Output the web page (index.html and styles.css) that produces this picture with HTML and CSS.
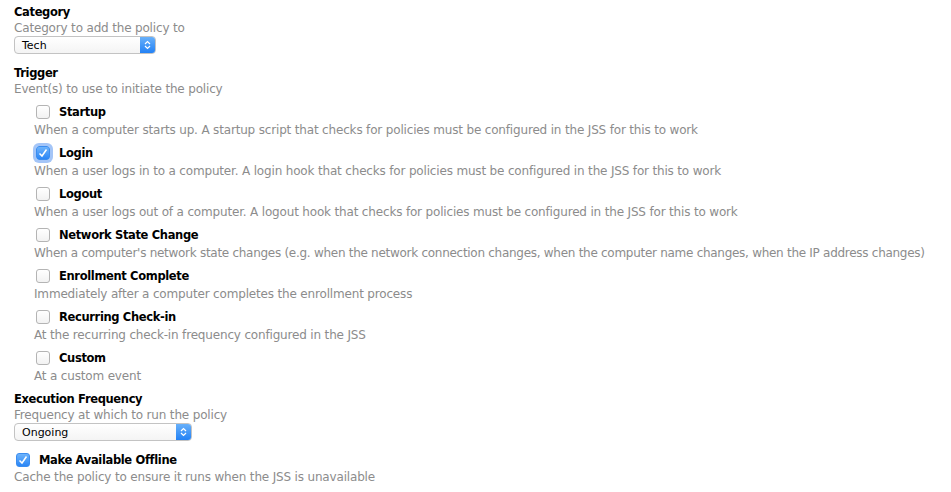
FILE: index.html
```html
<!DOCTYPE html>
<html lang="en">
<head>
  <meta charset="UTF-8">
  <title>Policy Options</title>
  <link rel="stylesheet" href="styles.css">
</head>
<body>
  <div class="policy-form">
    <div class="field">
      <div class="field-title">Category</div>
      <div class="field-desc">Category to add the policy to</div>
      <div class="select select-short">
        <span class="select-value">Tech</span>
        <span class="stepper">
          <svg width="7" height="10" viewBox="0 0 7 10"><path d="M1 4 L3.5 1.5 L6 4 M1 6 L3.5 8.5 L6 6" fill="none" stroke="#fff" stroke-width="1.2"/></svg>
        </span>
      </div>
    </div>

    <div class="field trigger-field">
      <div class="field-title">Trigger</div>
      <div class="field-desc">Event(s) to use to initiate the policy</div>
      <div class="trigger-list">
        <div class="trigger">
          <div class="check-row"><span class="checkbox"></span> Startup</div>
          <div class="field-desc">When a computer starts up. A startup script that checks for policies must be configured in the JSS for this to work</div>
        </div>
        <div class="trigger">
          <div class="check-row"><span class="checkbox checked focused"><svg width="14" height="14" viewBox="0 0 14 14"><path d="M3.5 7.5 L6 10 L10.5 3.5" fill="none" stroke="#fff" stroke-width="1.5"/></svg></span> Login</div>
          <div class="field-desc">When a user logs in to a computer. A login hook that checks for policies must be configured in the JSS for this to work</div>
        </div>
        <div class="trigger">
          <div class="check-row"><span class="checkbox"></span> Logout</div>
          <div class="field-desc">When a user logs out of a computer. A logout hook that checks for policies must be configured in the JSS for this to work</div>
        </div>
        <div class="trigger">
          <div class="check-row"><span class="checkbox"></span> Network State Change</div>
          <div class="field-desc nowrap">When a computer's network state changes (e.g. when the network connection changes, when the computer name changes, when the IP address changes)</div>
        </div>
        <div class="trigger">
          <div class="check-row"><span class="checkbox"></span> Enrollment Complete</div>
          <div class="field-desc">Immediately after a computer completes the enrollment process</div>
        </div>
        <div class="trigger">
          <div class="check-row"><span class="checkbox"></span> Recurring Check-in</div>
          <div class="field-desc">At the recurring check-in frequency configured in the JSS</div>
        </div>
        <div class="trigger">
          <div class="check-row"><span class="checkbox"></span> Custom</div>
          <div class="field-desc">At a custom event</div>
        </div>
      </div>
    </div>

    <div class="field">
      <div class="field-title">Execution Frequency</div>
      <div class="field-desc">Frequency at which to run the policy</div>
      <div class="select select-long">
        <span class="select-value">Ongoing</span>
        <span class="stepper">
          <svg width="7" height="10" viewBox="0 0 7 10"><path d="M1 4 L3.5 1.5 L6 4 M1 6 L3.5 8.5 L6 6" fill="none" stroke="#fff" stroke-width="1.2"/></svg>
        </span>
      </div>
    </div>

    <div class="field">
      <div class="check-row"><span class="checkbox checked"><svg width="14" height="14" viewBox="0 0 14 14"><path d="M3.5 7.5 L6 10 L10.5 3.5" fill="none" stroke="#fff" stroke-width="1.5"/></svg></span> Make Available Offline</div>
      <div class="field-desc">Cache the policy to ensure it runs when the JSS is unavailable</div>
    </div>
  </div>
</body>
</html>
```

FILE: styles.css
```css
body {
  font-family: "DejaVu Sans", Verdana, sans-serif;
  font-size: 12px;
  color: #000;
  background-color: #fff;
  margin: 0;
  padding: 0;
}

.policy-form {
  padding: 4px 14px 0;
}

.field {
  margin-bottom: 11px;
}

.trigger-field {
  margin-bottom: 7px;
}

.field-title {
  font-weight: bold;
  font-size: 11.5px;
  letter-spacing: -0.35px;
  line-height: 16px;
}

.field-desc {
  color: #8c8c8c;
  letter-spacing: -0.17px;
  line-height: 16px;
}

.nowrap {
  white-space: nowrap;
  letter-spacing: -0.28px;
}

.select {
  display: flex;
  align-items: center;
  height: 16px;
  border: 1px solid #c3c3c3;
  border-radius: 4px;
  background: linear-gradient(#fff, #f4f4f4);
  font-size: 11px;
  overflow: hidden;
}

.select-short {
  width: 140px;
}

.select-long {
  width: 176px;
}

.select-value {
  flex: 1;
  padding-left: 7px;
}

.stepper {
  display: flex;
  align-items: center;
  justify-content: center;
  width: 15px;
  height: 18px;
  background: linear-gradient(#6cb3fa, #1f7ff5);
}

.trigger-list {
  padding-left: 20px;
}

.trigger {
  margin-top: 6px;
}

.trigger .field-desc {
  margin-top: 1px;
}

.check-row {
  display: flex;
  align-items: center;
  gap: 9px;
  height: 18px;
  font-weight: bold;
  font-size: 11.5px;
  letter-spacing: -0.35px;
}

.field > .check-row {
  margin-top: -1px;
}

.checkbox {
  box-sizing: border-box;
  display: block;
  width: 14px;
  height: 14px;
  margin-left: 2px;
  border: 1px solid #b4b4b4;
  border-radius: 3px;
  background: linear-gradient(#fff, #f2f2f2);
}

.checkbox svg {
  display: block;
  margin: -1px;
}

.checkbox.checked {
  border-color: #3b8df0;
  background: linear-gradient(#6db3fb, #2a86f6);
}

.checkbox.focused {
  box-shadow: 0 0 0 3px rgba(90, 150, 240, 0.55);
}
```
